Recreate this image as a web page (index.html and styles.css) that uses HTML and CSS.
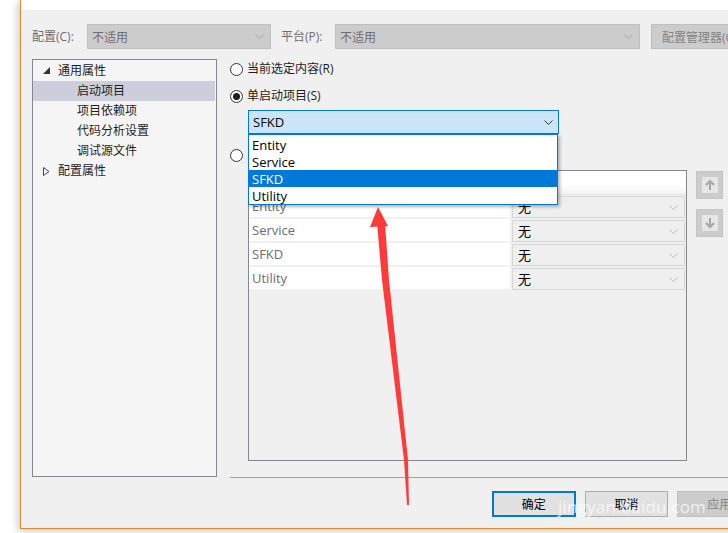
FILE: index.html
```html
<!DOCTYPE html>
<html lang="zh-CN">
<head>
    <meta charset="UTF-8">
    <title>启动项目 属性页</title>
    <link rel="stylesheet" href="styles.css">
</head>
<body>
    <div class="window">
        <div class="titlebar"></div>
        <div class="content">
            <div class="toolbar">
                <span class="tb-label">配置(C):</span>
                <div class="dd dd-disabled dd-config">
                    <span>不适用</span>
                    <svg class="chev" width="9" height="5" viewBox="0 0 9 5"><polyline points="0.5,0.5 4.5,4.5 8.5,0.5" /></svg>
                </div>
                <span class="tb-label tb-platform">平台(P):</span>
                <div class="dd dd-disabled dd-platform">
                    <span>不适用</span>
                    <svg class="chev" width="9" height="5" viewBox="0 0 9 5"><polyline points="0.5,0.5 4.5,4.5 8.5,0.5" /></svg>
                </div>
                <div class="btn btn-disabled btn-manager">配置管理器(O)...</div>
            </div>

            <div class="main">
                <div class="tree">
                    <div class="tree-item">
                        <svg class="twisty" width="7" height="7" viewBox="0 0 7 7"><polygon points="0,7 7,7 7,0" fill="#333" /></svg>
                        通用属性
                    </div>
                    <div class="tree-item child selected">启动项目</div>
                    <div class="tree-item child">项目依赖项</div>
                    <div class="tree-item child">代码分析设置</div>
                    <div class="tree-item child">调试源文件</div>
                    <div class="tree-item">
                        <svg class="twisty" width="7" height="9" viewBox="0 0 7 9"><polygon points="0.5,0.5 6,4.5 0.5,8.5" fill="none" stroke="#444" /></svg>
                        配置属性
                    </div>
                </div>

                <div class="pane">
                    <label class="radio r1"><span class="radio-dot"></span>当前选定内容(R)</label>
                    <label class="radio r2 checked"><span class="radio-dot"></span>单启动项目(S)</label>
                    <div class="combo">
                        <span>SFKD</span>
                        <svg class="chev" width="9" height="5" viewBox="0 0 9 5"><polyline points="0.5,0.5 4.5,4.5 8.5,0.5" /></svg>
                        <ul class="combo-list">
                            <li>Entity</li>
                            <li>Service</li>
                            <li class="active">SFKD</li>
                            <li>Utility</li>
                        </ul>
                    </div>
                    <label class="radio r3"><span class="radio-dot"></span>多启动项目(U):</label>

                    <div class="grid-row">
                        <div class="grid">
                            <div class="grid-head"></div>
                            <div class="grid-line">
                                <div class="cell-name">Entity</div>
                                <div class="cell-action">无<svg class="chev" width="9" height="5" viewBox="0 0 9 5"><polyline points="0.5,0.5 4.5,4.5 8.5,0.5" /></svg></div>
                            </div>
                            <div class="grid-line">
                                <div class="cell-name">Service</div>
                                <div class="cell-action">无<svg class="chev" width="9" height="5" viewBox="0 0 9 5"><polyline points="0.5,0.5 4.5,4.5 8.5,0.5" /></svg></div>
                            </div>
                            <div class="grid-line">
                                <div class="cell-name">SFKD</div>
                                <div class="cell-action">无<svg class="chev" width="9" height="5" viewBox="0 0 9 5"><polyline points="0.5,0.5 4.5,4.5 8.5,0.5" /></svg></div>
                            </div>
                            <div class="grid-line">
                                <div class="cell-name">Utility</div>
                                <div class="cell-action">无<svg class="chev" width="9" height="5" viewBox="0 0 9 5"><polyline points="0.5,0.5 4.5,4.5 8.5,0.5" /></svg></div>
                            </div>
                        </div>
                        <div class="movers">
                            <div class="mover">
                                <span class="mover-face">
                                    <svg width="16" height="16" viewBox="0 0 16 16"><path d="M8 13V4M4 8l4-4 4 4" fill="none" stroke="#a6a6a6" stroke-width="2" /></svg>
                                </span>
                            </div>
                            <div class="mover">
                                <span class="mover-face">
                                    <svg width="16" height="16" viewBox="0 0 16 16"><path d="M8 3v9M4 8l4 4 4-4" fill="none" stroke="#a6a6a6" stroke-width="2" /></svg>
                                </span>
                            </div>
                        </div>
                    </div>
                </div>
            </div>

            <div class="footer">
                <div class="btn btn-default">确定</div>
                <div class="btn">取消</div>
                <div class="btn btn-disabled">应用</div>
            </div>
        </div>
    </div>

    <svg class="annotation" width="728" height="533" viewBox="0 0 728 533">
        <polygon points="377,223 385,223 389,280 408,460 409,505 407,505 404,460 382,280" fill="#ff3b3b" />
        <polygon points="378,207 388,226 370,227" fill="#ff3b3b" />
    </svg>
    <div class="watermark">jingyan.baidu.com</div>
</body>
</html>
```

FILE: styles.css
```css
html, body {
    margin: 0;
    padding: 0;
}
body {
    width: 728px;
    height: 533px;
    overflow: hidden;
    background: #fff;
    font-family: "Open Sans", "Noto Sans CJK SC", sans-serif;
    font-size: 12px;
    color: #000;
    position: relative;
}
.window {
    margin-left: 20px;
    width: 740px;
    height: 528px;
    background: #f0f0f0;
    border-left: 1px solid #e8891a;
    border-bottom: 1px solid #e8891a;
    box-shadow: -2px 2px 8px rgba(0, 0, 0, 0.22);
}
.titlebar {
    height: 10px;
    background: #fff;
}
.content {
    padding: 14px 0 0 11px;
}

/* top toolbar */
.toolbar {
    display: flex;
    align-items: center;
    height: 25px;
}
.tb-label {
    width: 55px;
    color: #6d6d6d;
    line-height: 25px;
}
.tb-platform {
    margin-left: 10px;
    width: 54px;
}
.dd {
    display: flex;
    align-items: center;
    justify-content: space-between;
    height: 25px;
    box-sizing: border-box;
    padding: 0 6px 0 4px;
    border: 1px solid #bfbfbf;
}
.dd-disabled {
    background: #cccccc;
    color: #6d6d6d;
}
.dd-config {
    width: 184px;
}
.dd-platform {
    width: 305px;
}
.chev polyline {
    fill: none;
    stroke: #a8a8a8;
    stroke-width: 1;
}
.btn {
    display: flex;
    align-items: center;
    justify-content: center;
    height: 26px;
    width: 85px;
    box-sizing: border-box;
    background: #e1e1e1;
    border: 1px solid #adadad;
}
.btn-disabled {
    background: #cccccc;
    border-color: #bfbfbf;
    color: #838383;
}
.btn-manager {
    margin-left: 11px;
    width: 100px;
    height: 25px;
    justify-content: flex-start;
    padding-left: 10px;
    white-space: nowrap;
}
.btn-default {
    border: 2px solid #0078d7;
}

/* main area */
.main {
    display: flex;
    margin-top: 10px;
}
.tree {
    width: 185px;
    height: 418px;
    box-sizing: border-box;
    padding-top: 1px;
    border: 1px solid #828790;
    background: #f5f5f5;
}
.tree-item {
    position: relative;
    height: 20px;
    line-height: 20px;
    padding-left: 25px;
    margin: 0 1px 0 0;
    color: #1e1e1e;
}
.tree-item.child {
    padding-left: 44px;
}
.tree-item.selected {
    background: #cccedb;
}
.twisty {
    position: absolute;
    left: 10px;
    top: 6px;
}
.pane {
    flex: 1;
    margin-left: 13px;
    height: 418px;
    border-bottom: 1px solid #a0a0a0;
}
.radio {
    display: flex;
    align-items: center;
    gap: 4px;
    height: 16px;
    line-height: 16px;
    color: #1e1e1e;
}
.radio-dot {
    width: 13px;
    height: 13px;
    box-sizing: border-box;
    border: 1px solid #333;
    border-radius: 50%;
    background: #fff;
    display: flex;
    align-items: center;
    justify-content: center;
}
.radio.checked .radio-dot::after {
    content: "";
    width: 7px;
    height: 7px;
    border-radius: 50%;
    background: #1e1e1e;
}
.r1 {
    margin-top: 2px;
}
.r2 {
    margin-top: 11px;
}
.r3 {
    margin-top: 13px;
}

/* open combo box */
.combo {
    position: relative;
    display: flex;
    align-items: center;
    justify-content: space-between;
    margin: 6px 0 0 18px;
    width: 311px;
    height: 24px;
    box-sizing: border-box;
    padding: 0 5px 0 4px;
    background: #cce4f7;
    border: 1px solid #0078d7;
    font-size: 13px;
}
.combo .chev polyline {
    stroke: #333;
}
.combo-list {
    position: absolute;
    top: 23px;
    left: -1px;
    width: 310px;
    box-sizing: border-box;
    margin: 0;
    padding: 1px 0 0;
    list-style: none;
    background: #fff;
    border: 1px solid #0078d7;
    box-shadow: 2px 2px 3px rgba(0, 0, 0, 0.28);
    z-index: 2;
}
.combo-list li {
    height: 17px;
    line-height: 18px;
    padding-left: 3px;
    font-size: 13px;
}
.combo-list li.active {
    background: #0078d7;
    color: #fff;
}

/* multiple startup grid */
.grid-row {
    display: flex;
    align-items: flex-start;
    margin: 7px 0 0 18px;
}
.grid {
    width: 439px;
    height: 291px;
    box-sizing: border-box;
    border: 1px solid #828790;
    background: #f0f0f0;
}
.grid-head {
    height: 24px;
    background: linear-gradient(#fff 60%, #f3f3f3);
    border-bottom: 1px solid #e6e6e6;
    box-sizing: border-box;
}
.grid-line {
    display: flex;
    height: 24px;
}
.cell-name {
    width: 261px;
    background: #fff;
    color: #6d6d6d;
    padding-left: 3px;
    box-sizing: border-box;
    line-height: 22px;
    border-bottom: 2px solid #f0f0f0;
    font-size: 13px;
}
.cell-action {
    display: flex;
    align-items: center;
    justify-content: space-between;
    margin: 1px 1px 0 2px;
    flex: 1;
    height: 22px;
    box-sizing: border-box;
    padding: 0 6px 0 5px;
    background: #efefef;
    border: 1px solid #d7d7d7;
    font-size: 13px;
    line-height: 18px;
}
.cell-action .chev polyline {
    stroke: #bcbcbc;
}
.movers {
    display: flex;
    flex-direction: column;
    gap: 10px;
    margin: 1px 0 0 9px;
}
.mover {
    width: 27px;
    height: 28px;
    box-sizing: border-box;
    background: #cccccc;
    border: 1px solid #c4c4c4;
    display: flex;
    align-items: center;
    justify-content: center;
}
.mover-face {
    display: flex;
    width: 16px;
    height: 16px;
    background: #e6e6e6;
}

/* dialog buttons */
.footer {
    display: flex;
    gap: 9px;
    margin-top: 13px;
    padding-left: 460px;
}

/* screenshot annotations */
.annotation {
    position: absolute;
    left: 0;
    top: 0;
    pointer-events: none;
}
.watermark {
    position: absolute;
    left: 558px;
    top: 495px;
    font-family: "Open Sans", sans-serif;
    font-size: 17px;
    color: rgba(255, 255, 255, 0.7);
    letter-spacing: 0.2px;
}
```
